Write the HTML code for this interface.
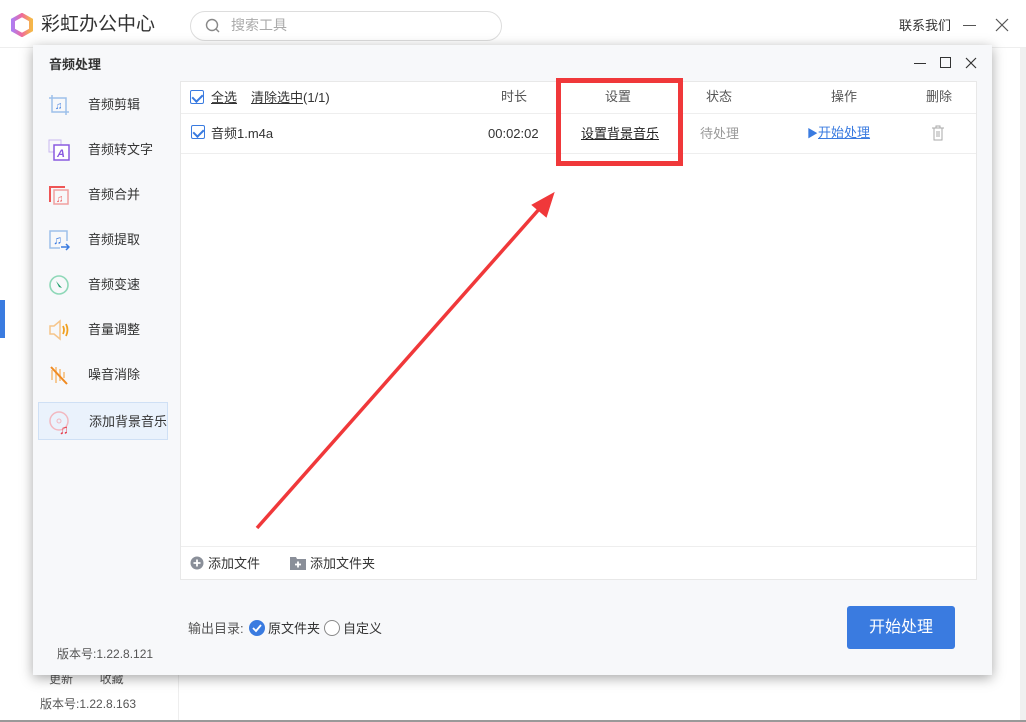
<!DOCTYPE html>
<html><head><meta charset="utf-8"><style>
*{margin:0;padding:0;box-sizing:border-box}
body{width:1026px;height:722px;position:relative;overflow:hidden;background:#fff;font-family:"Liberation Sans","Noto Sans CJK SC",sans-serif;font-size:13px;line-height:15px;color:#333}
.abs{position:absolute}
.cb{position:absolute;width:14px;height:14px;border:1px solid #3a7be0;border-radius:2px;background:#fff}
.cb:after{content:"";position:absolute;left:3px;top:1px;width:5px;height:8px;border:solid #3a7be0;border-width:0 2px 2px 0;transform:rotate(45deg)}
.side{position:absolute;left:38px;width:130px;height:38px;font-size:13px;color:#333}
.side span{position:absolute;left:50px;top:11px}
.side i{position:absolute;left:10px;top:8px;width:22px;height:22px}
</style></head><body>
<div class="abs" style="left:0;top:0;width:1026px;height:48px;background:#fff;border-bottom:1px solid #eee"></div>
<svg class="abs" style="left:10px;top:13px" width="24" height="24" viewBox="0 0 24 24"><path d="M12 2 L21 7 L21 17 L12 22 L3 17 L3 7 Z" fill="none" stroke="url(#g)" stroke-width="4"/><defs><linearGradient id="g" x1="0" x2="1"><stop offset="0" stop-color="#b07cf0"/><stop offset=".5" stop-color="#f06a9a"/><stop offset="1" stop-color="#f5b74a"/></linearGradient></defs></svg>
<div class="abs" style="left:41px;top:14px;font-size:19px;line-height:22px;color:#333">彩虹办公中心</div>
<div class="abs" style="left:190px;top:11px;width:312px;height:30px;border:1px solid #ddd;border-radius:15px"></div>
<svg class="abs" style="left:205px;top:18px" width="16" height="16"><circle cx="7" cy="7" r="5.5" fill="none" stroke="#888" stroke-width="1.4"/><path d="M11 11 L14 14" stroke="#888" stroke-width="1.4"/></svg>
<div class="abs" style="left:231px;top:17px;font-size:14px;line-height:17px;color:#aaa">搜索工具</div>
<div class="abs" style="left:899px;top:18px;font-size:13px;color:#333">联系我们</div>
<div class="abs" style="left:963px;top:25px;width:13px;height:1px;background:#555"></div>
<svg class="abs" style="left:995px;top:18px" width="14" height="14"><path d="M1 1L13 13M13 1L1 13" stroke="#555" stroke-width="1.2"/></svg>
<div class="abs" style="left:0;top:300px;width:5px;height:38px;background:#3a7be0"></div>
<div class="abs" style="left:178px;top:675px;width:1px;height:47px;background:#eee"></div>
<div class="abs" style="left:49px;top:672px;font-size:12px;color:#555">更新&nbsp;&nbsp;&nbsp;&nbsp;&nbsp;&nbsp;&nbsp;&nbsp;收藏</div>
<div class="abs" style="left:40px;top:697px;font-size:12px;color:#555">版本号:1.22.8.163</div>
<div class="abs" style="left:0;top:720px;width:1026px;height:2px;background:#999"></div>
<div class="abs" style="left:1020px;top:48px;width:6px;height:672px;background:#f0f0f0"></div>
<div class="abs" style="left:33px;top:45px;width:959px;height:630px;background:#f7f8fa;box-shadow:0 3px 12px rgba(0,0,0,.35)"></div>
<div class="abs" style="left:49px;top:57px;font-size:13px;font-weight:bold;color:#333">音频处理</div>
<div class="abs" style="left:914px;top:63px;width:12px;height:1px;background:#333"></div>
<div class="abs" style="left:940px;top:57px;width:11px;height:11px;border:1px solid #333"></div>
<svg class="abs" style="left:965px;top:57px" width="12" height="12"><path d="M1 1L11 11M11 1L1 11" stroke="#333" stroke-width="1.2"/></svg>
<div class="side" style="top:86px"><i><svg width="22" height="22"><path d="M4 1V18H21M1 4H18V21" fill="none" stroke="#9dc0ea" stroke-width="1.5"/><text x="7" y="15" font-size="10" fill="#3a7be0">♫</text></svg></i><span>音频剪辑</span></div>
<div class="side" style="top:131px"><i><svg width="22" height="22"><rect x="1" y="1" width="12" height="12" fill="none" stroke="#c8b8f0"/><rect x="6" y="6" width="15" height="15" fill="#fff" stroke="#8a5ae0" stroke-width="1.5"/><text x="9" y="18" font-size="11" font-weight="bold" fill="#8a5ae0">A</text></svg></i><span>音频转文字</span></div>
<div class="side" style="top:176px"><i><svg width="22" height="22"><path d="M2 18V3H17" fill="none" stroke="#e55" stroke-width="2"/><rect x="6" y="6" width="14" height="14" fill="none" stroke="#f0a0a0" stroke-width="1.5"/><text x="8" y="18" font-size="10" fill="#e55">♫</text></svg></i><span>音频合并</span></div>
<div class="side" style="top:221px"><i><svg width="22" height="22"><path d="M19 12V2H2V19H12" fill="none" stroke="#9dc0ea" stroke-width="1.5"/><text x="5" y="15" font-size="12" fill="#3a7be0">♫</text><path d="M13 18H21M18 15L21 18L18 21" fill="none" stroke="#3a7be0" stroke-width="1.5"/></svg></i><span>音频提取</span></div>
<div class="side" style="top:266px"><i><svg width="22" height="22"><circle cx="11" cy="11" r="9" fill="none" stroke="#8fd8b8" stroke-width="1.6"/><path d="M8 7L14 14L11 13Z" fill="#1d9d6a"/></svg></i><span>音频变速</span></div>
<div class="side" style="top:311px"><i><svg width="22" height="22"><path d="M2 7H6L12 2V20L6 15H2Z" fill="none" stroke="#f6c58a" stroke-width="1.5"/><path d="M15 7Q17 11 15 15M18 5Q21 11 18 17" fill="none" stroke="#f0a020" stroke-width="1.8"/></svg></i><span>音量调整</span></div>
<div class="side" style="top:356px"><i><svg width="22" height="22"><path d="M4 6V16M8 3V19M12 5V17M16 8V14" stroke="#f6c58a" stroke-width="1.8"/><path d="M3 3L19 20" stroke="#f08a20" stroke-width="2"/></svg></i><span>噪音消除</span></div>
<div class="side" style="top:402px;background:#eaf2fc;border:1px solid #cfe0f5"><i><svg width="24" height="24"><circle cx="10" cy="10" r="9" fill="none" stroke="#f2b8c0" stroke-width="1.5"/><circle cx="10" cy="10" r="2" fill="none" stroke="#f2b8c0"/><text x="10" y="23" font-size="13" fill="#e63a4a">♫</text></svg></i><span>添加背景音乐</span></div>
<div class="abs" style="left:57px;top:647px;font-size:12px;color:#555">版本号:1.22.8.121</div>
<div class="abs" style="left:180px;top:81px;width:797px;height:499px;background:#fff;border:1px solid #e8e8e8"></div>
<div class="abs" style="left:181px;top:113px;width:795px;height:1px;background:#eee"></div>
<div class="abs" style="left:181px;top:153px;width:795px;height:1px;background:#eee"></div>
<div class="abs" style="left:181px;top:546px;width:795px;height:1px;background:#eee"></div>
<div class="cb" style="left:190px;top:90px"></div>
<div class="abs" style="left:211px;top:90px;text-decoration:underline;color:#333">全选</div>
<div class="abs" style="left:251px;top:90px;color:#333"><u>清除选中</u>(1/1)</div>
<div class="abs" style="left:501px;top:89px;color:#555">时长</div>
<div class="abs" style="left:605px;top:89px;color:#555">设置</div>
<div class="abs" style="left:706px;top:89px;color:#555">状态</div>
<div class="abs" style="left:831px;top:89px;color:#555">操作</div>
<div class="abs" style="left:926px;top:89px;color:#555">删除</div>
<div class="cb" style="left:191px;top:125px"></div>
<div class="abs" style="left:211px;top:126px">音频1.m4a</div>
<div class="abs" style="left:488px;top:126px">00:02:02</div>
<div class="abs" style="left:581px;top:126px;text-decoration:underline;color:#222">设置背景音乐</div>
<div class="abs" style="left:700px;top:126px;color:#999">待处理</div>
<div class="abs" style="left:807px;top:125px;color:#3a7be0"><span style="font-size:11px">▶</span><u>开始处理</u></div>
<svg class="abs" style="left:931px;top:125px" width="14" height="16"><path d="M1 3H13M5 3V1H9V3M3 3V15H11V3M6 6V12M8 6V12" fill="none" stroke="#aaa" stroke-width="1"/></svg>
<svg class="abs" style="left:190px;top:556px" width="14" height="14"><circle cx="7" cy="7" r="6.5" fill="#8a8f99"/><path d="M3.5 7H10.5M7 3.5V10.5" stroke="#fff" stroke-width="1.8"/></svg>
<div class="abs" style="left:208px;top:556px;color:#333">添加文件</div>
<svg class="abs" style="left:290px;top:556px" width="16" height="14"><path d="M0 1H6L7 3H16V14H0Z" fill="#8a8f99"/><path d="M5 8.5H11M8 5.5V11.5" stroke="#fff" stroke-width="1.8"/></svg>
<div class="abs" style="left:310px;top:556px;color:#333">添加文件夹</div>
<div class="abs" style="left:188px;top:621px;color:#555">输出目录:</div>
<svg class="abs" style="left:249px;top:620px" width="16" height="16"><circle cx="8" cy="8" r="8" fill="#3a7be0"/><path d="M4 8L7 11L12 5" fill="none" stroke="#fff" stroke-width="1.8"/></svg>
<div class="abs" style="left:268px;top:621px;color:#333">原文件夹</div>
<div class="abs" style="left:324px;top:620px;width:16px;height:16px;border:1px solid #888;border-radius:50%;background:#fff"></div>
<div class="abs" style="left:343px;top:621px;color:#333">自定义</div>
<div class="abs" style="left:847px;top:606px;width:108px;height:43px;background:#3a7be0;border-radius:3px;color:#fff;font-size:16px;text-align:center;line-height:43px">开始处理</div>
<div class="abs" style="left:556px;top:78px;width:127px;height:88px;border:5px solid #f0383a"></div>
<svg class="abs" style="left:0;top:0" width="1026" height="722"><path d="M257 528L541 207" stroke="#f0383a" stroke-width="3.5"/><path d="M553 194L533 205L546 216Z" fill="#f0383a" stroke="#f0383a" stroke-width="2"/></svg>
</body></html>
